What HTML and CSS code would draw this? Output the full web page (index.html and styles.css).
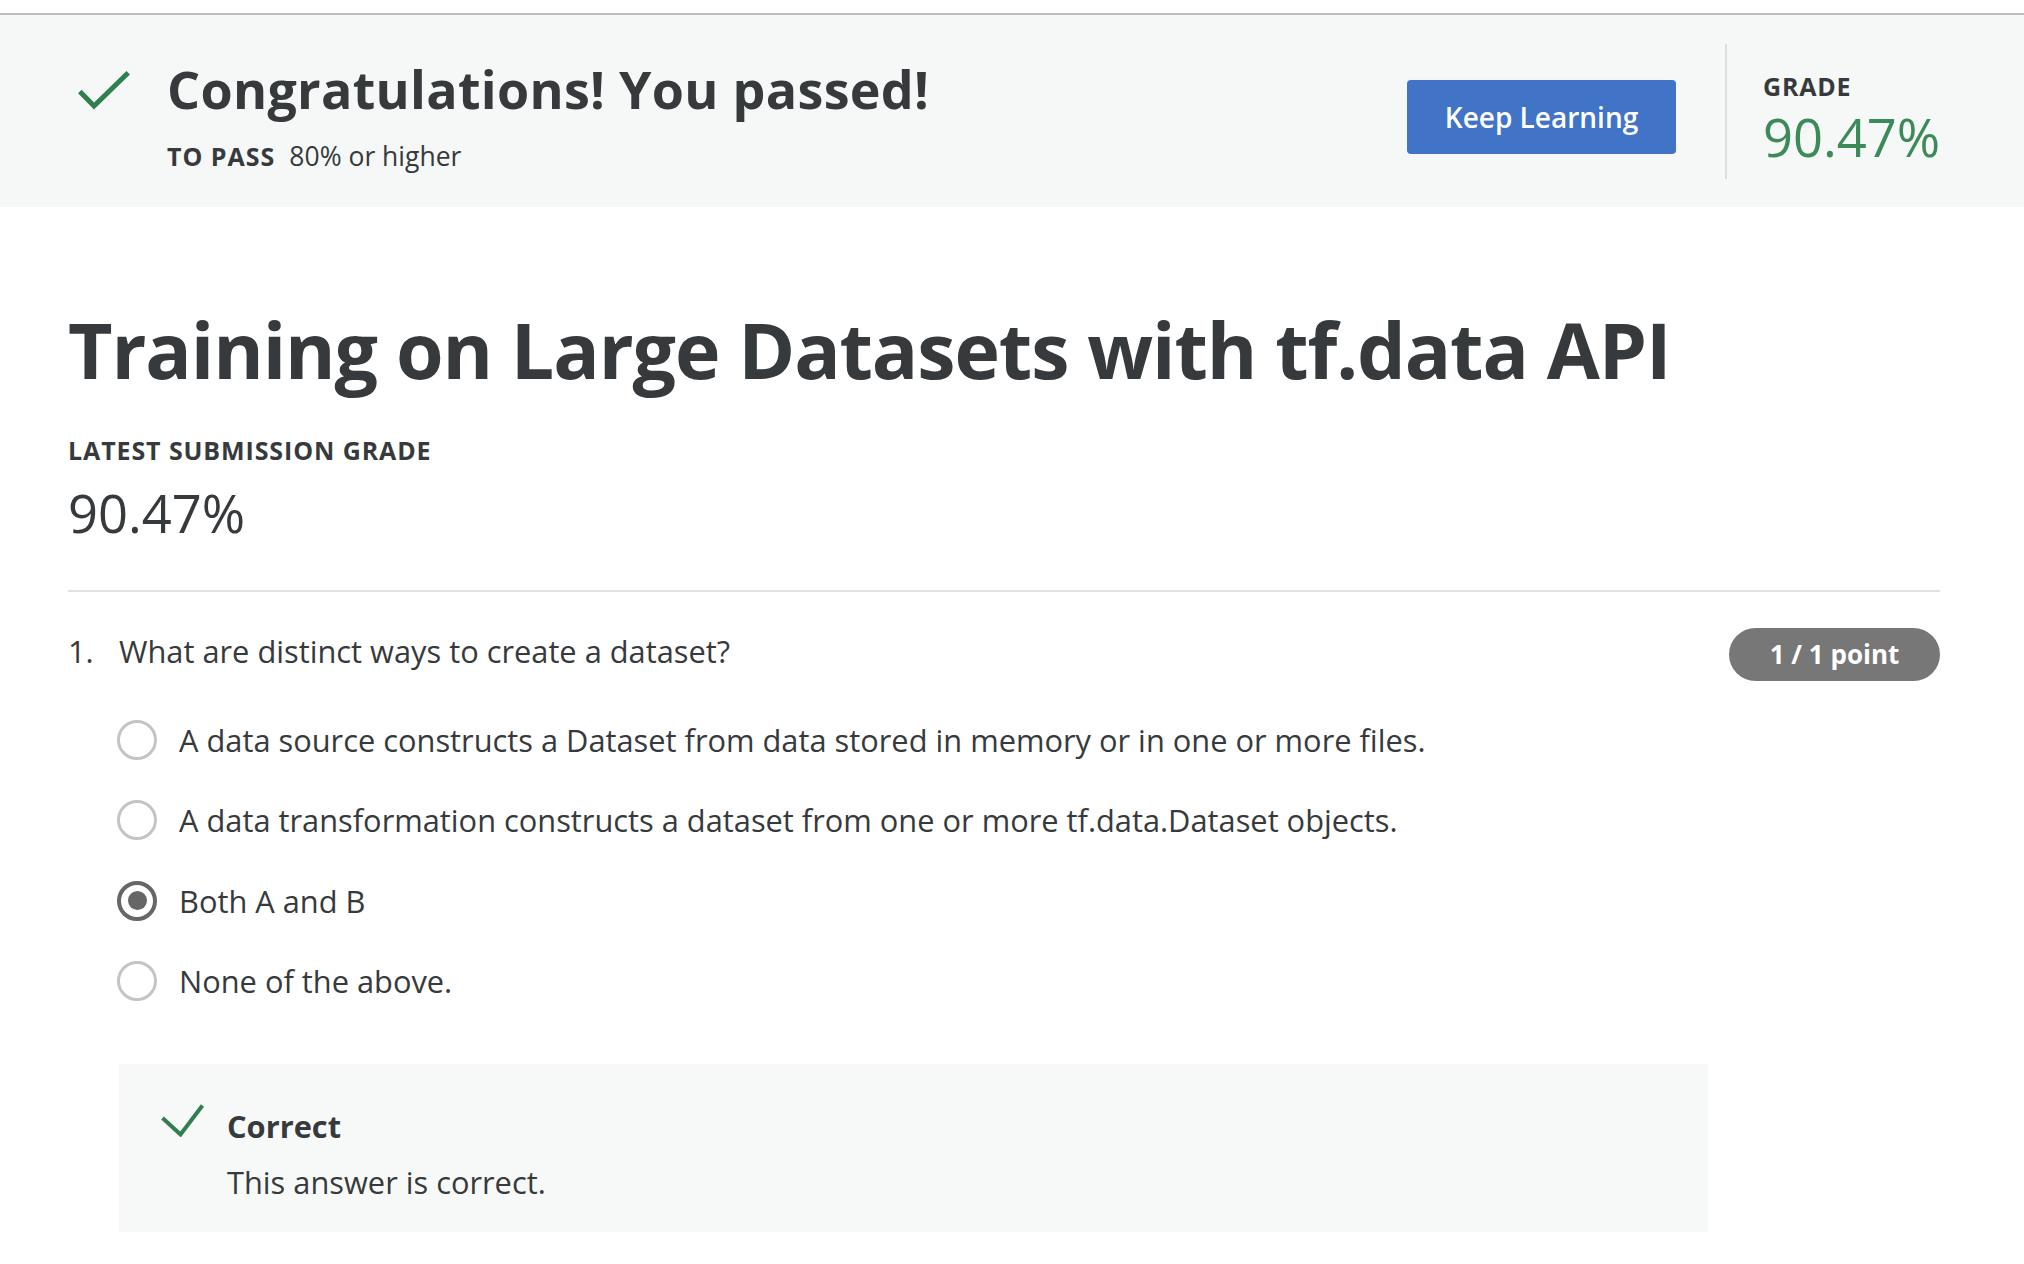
FILE: index.html
```html
<!DOCTYPE html>
<html lang="en">
<head>
<meta charset="utf-8">
<title>Training on Large Datasets with tf.data API</title>
<link rel="stylesheet" href="styles.css">
</head>
<body>
<div class="topgap"></div>
<header class="banner">
  <div class="pass">
    <svg class="pass-check" width="52" height="40" viewBox="0 0 52 40" aria-hidden="true">
      <path d="M1.8 20.5 L16 35 L50.2 1.8" fill="none" stroke="#2f7f4f" stroke-width="5"/>
    </svg>
    <div class="pass-text">
      <h2 class="pass-title">Congratulations! You passed!</h2>
      <div class="pass-req"><span class="pass-label">TO PASS</span><span>80% or higher</span></div>
    </div>
  </div>
  <div class="actions">
    <button class="btn-primary">Keep Learning</button>
    <div class="divider"></div>
    <div class="grade">
      <div class="grade-label">GRADE</div>
      <div class="grade-value">90.47%</div>
    </div>
  </div>
</header>

<main class="content">
  <h1 class="title">Training on Large Datasets with tf.data API</h1>
  <div class="sub-label">LATEST SUBMISSION GRADE</div>
  <div class="sub-value">90.47%</div>
  <hr class="sep">

  <section class="question">
    <div class="q-row">
      <div class="q-num">1.</div>
      <div class="q-text">What are distinct ways to create a dataset?</div>
      <div class="points">1 / 1 point</div>
    </div>
    <div class="options">
      <label class="option"><span class="radio"></span><span class="opt-text">A data source constructs a Dataset from data stored in memory or in one or more files.</span></label>
      <label class="option"><span class="radio"></span><span class="opt-text">A data transformation constructs a dataset from one or more tf.data.Dataset objects.</span></label>
      <label class="option"><span class="radio radio-on"><span class="dot"></span></span><span class="opt-text">Both A and B</span></label>
      <label class="option"><span class="radio"></span><span class="opt-text">None of the above.</span></label>
    </div>
    <div class="feedback">
      <svg class="fb-check" width="43" height="33" viewBox="0 0 43 33" aria-hidden="true">
        <path d="M1.5 14 L19.5 30.5 L41.5 1.5" fill="none" stroke="#2f7f4f" stroke-width="4"/>
      </svg>
      <div class="fb-text">
        <div class="fb-title">Correct</div>
        <div class="fb-body">This answer is correct.</div>
      </div>
    </div>
  </section>
</main>
</body>
</html>
```
FILE: styles.css
```css
* { box-sizing: border-box; }
html, body { margin: 0; padding: 0; background: #ffffff; }
body {
  font-family: "Open Sans", "Liberation Sans", sans-serif;
  color: #373a3c;
  width: 2024px;
}
.topgap { height: 13px; }

.banner {
  display: flex;
  align-items: flex-start;
  height: 194px;
  border-top: 2px solid #bdbdbd;
  background: #f5f8f7;
  padding: 0 0 0 78px;
}
.pass { display: flex; align-items: flex-start; margin-top: 43.5px; }
.pass-check { margin-top: 12.5px; flex: none; display: block; }
.pass-text { margin-left: 37px; }
.pass-title {
  margin: 0;
  font-size: 52px;
  line-height: 60px;
  font-weight: 700;
  letter-spacing: 0.3px;
}
.pass-req {
  margin-top: 20.5px;
  font-size: 26.5px;
  line-height: 34px;
  display: flex;
  align-items: baseline;
  gap: 14px;
}
.pass-label { font-weight: 700; font-size: 25px; letter-spacing: 1px; }

.actions { margin-left: auto; display: flex; align-items: flex-start; width: 617px; }
.btn-primary {
  margin-top: 65px;
  width: 269px;
  height: 74px;
  border: none;
  border-radius: 4px;
  background: #4173c6;
  color: #ffffff;
  font-family: inherit;
  font-size: 28px;
  font-weight: 600;
  padding: 0;
}
.divider {
  margin-top: 29px;
  margin-left: 49px;
  width: 2px;
  height: 135px;
  background: #dcdddd;
}
.grade { margin-left: 36px; margin-top: 55px; }
.grade-label { font-size: 25px; line-height: 32px; font-weight: 700; letter-spacing: 0.8px; }
.grade-value { margin-top: 5px; font-size: 52.5px; line-height: 60px; color: #3c8a5a; }

.content { padding-left: 68px; width: 1940px; }
.title {
  margin: 97px 0 0;
  font-size: 77px;
  line-height: 92px;
  font-weight: 700;
  letter-spacing: -1.1px;
  white-space: nowrap;
}
.sub-label { margin-top: 37.5px; font-size: 25px; line-height: 32px; font-weight: 700; letter-spacing: 0.9px; }
.sub-value { margin-top: 15px; font-size: 52.5px; line-height: 64px; }
.sep { margin: 45px 0 0; border: none; height: 2px; background: #e1e1e1; }

.question { margin-top: 36px; }
.q-row { display: flex; align-items: flex-start; }
.q-num { width: 51px; margin-top: 3px; font-size: 30.8px; line-height: 40px; }
.q-text { flex: 1; margin-top: 3px; font-size: 30.8px; line-height: 40px; }
.points {
  width: 211px;
  height: 53px;
  border-radius: 27px;
  background: #777777;
  color: #ffffff;
  font-size: 26px;
  font-weight: 700;
  display: flex;
  align-items: center;
  justify-content: center;
}

.options {
  margin: 39px 0 0 49px;
  display: flex;
  flex-direction: column;
  gap: 40.5px;
}
.option { display: flex; align-items: flex-start; gap: 22px; }
.radio {
  flex: none;
  width: 40px;
  height: 40px;
  border-radius: 50%;
  border: 3.5px solid #c4c4c4;
  background: #ffffff;
  display: flex;
  align-items: center;
  justify-content: center;
}
.radio-on { border: 4.5px solid #666666; }
.dot { width: 19px; height: 19px; border-radius: 50%; background: #666666; }
.opt-text { font-size: 30.8px; line-height: 40px; }

.feedback {
  margin: 63px 0 0 51px;
  width: 1589px;
  height: 168px;
  background: #f7f9f8;
  padding: 40px 0 0 42px;
  display: flex;
  align-items: flex-start;
}
.fb-check { flex: none; display: block; }
.fb-text { margin-left: 23px; margin-top: 2px; }
.fb-title { font-size: 30.8px; line-height: 40px; font-weight: 700; }
.fb-body { margin-top: 16px; font-size: 30.8px; line-height: 40px; }
```
